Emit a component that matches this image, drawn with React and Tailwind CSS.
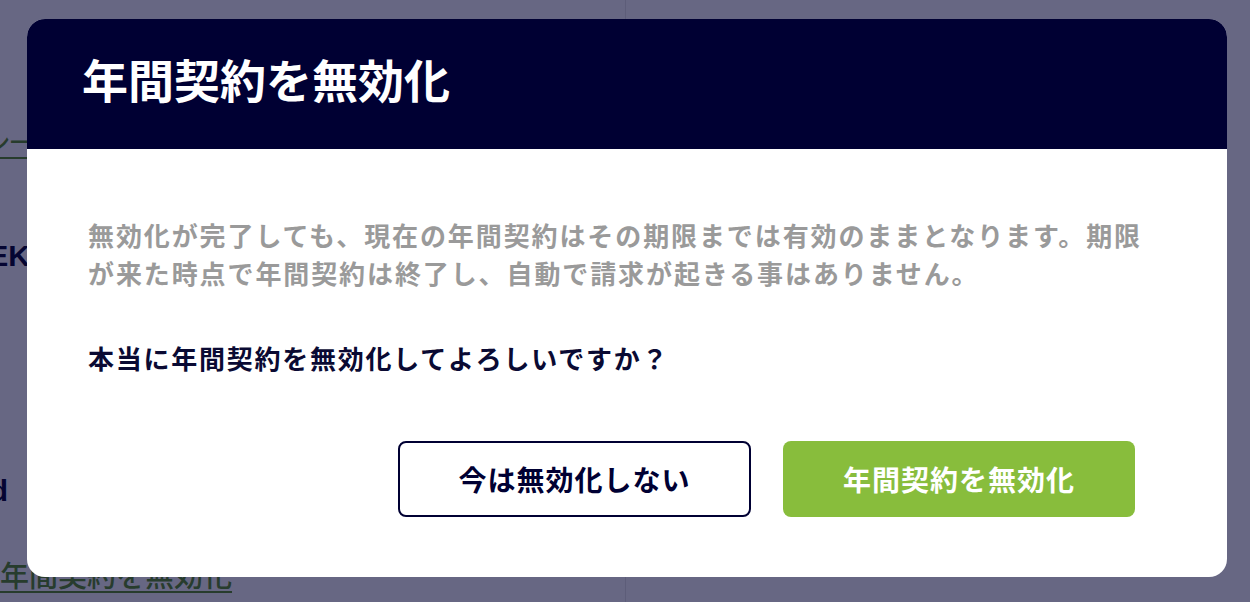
import React from 'react';

const jp = { fontFamily: '"Noto Sans CJK JP", "Noto Sans", sans-serif' };

const PageBehind = () => (
  <div className="flex h-full w-full bg-white" style={jp}>
    <div className="flex w-[626px] shrink-0 flex-col border-r border-[#e6e6e6]">
      <div className="mt-[126px] -ml-[134px] whitespace-nowrap">
        <a className="text-[24px] font-medium leading-[30px] text-[#5f9428] underline underline-offset-[6px]">ご利用プラン一覧を見る</a>
      </div>
      <div className="mt-[80px] flex w-[30px] justify-end whitespace-nowrap">
        <span className="text-[30px] font-bold leading-[40px] text-[#0c0c36]" style={{ fontFamily: '"Liberation Sans", sans-serif' }}>1 WEEK</span>
      </div>
      <div className="mt-[195px] flex w-[8px] justify-end whitespace-nowrap">
        <span className="text-[30px] font-bold leading-[40px] text-[#0c0c36]" style={{ fontFamily: '"Liberation Sans", sans-serif' }}>Paid</span>
      </div>
      <div className="mt-[47px] whitespace-nowrap">
        <a className="text-[29px] font-medium leading-[32px] text-[#5f9428] underline underline-offset-[4px]">年間契約を無効化</a>
      </div>
    </div>
    <div className="flex-1" />
  </div>
);

export default function App() {
  return (
    <div className="relative h-[602px] w-full overflow-hidden">
      <PageBehind />
      <div className="absolute inset-0 bg-[#020230]/60 pl-[27px] pt-[19px]" style={jp}>
        <div className="flex w-[1200px] flex-col overflow-hidden rounded-[18px] bg-white">
          <div className="flex h-[130px] items-center bg-[#000033] px-[55px] pb-[12px]">
            <h2 className="text-[46px] font-bold leading-none text-white">年間契約を無効化</h2>
          </div>
          <div className="flex flex-col pb-[60px] pl-[61px] pr-[55px] pt-[67px]">
            <p className="text-[26px] font-semibold leading-[38px] tracking-[1.9px] text-[#9a9a9a]">
              無効化が完了しても、現在の年間契約はその期限までは有効のままとなります。期限
              <br />
              が来た時点で年間契約は終了し、自動で請求が起きる事はありません。
            </p>
            <p className="mt-[47px] text-[26px] font-semibold leading-[38px] tracking-[1.75px] text-[#0a0a33]">
              本当に年間契約を無効化してよろしいですか？
            </p>
            <div className="mt-[64px] flex justify-end gap-[32px] pr-[37px]">
              <button className="flex h-[76px] w-[353px] items-center justify-center rounded-[8px] border-2 border-[#000033] bg-white text-[28px] font-bold tracking-[1px] text-[#000033]">
                今は無効化しない
              </button>
              <button className="flex h-[76px] w-[352px] items-center justify-center rounded-[8px] bg-[#88bd3c] text-[28px] font-bold tracking-[1px] text-white">
                年間契約を無効化
              </button>
            </div>
          </div>
        </div>
      </div>
    </div>
  );
}
